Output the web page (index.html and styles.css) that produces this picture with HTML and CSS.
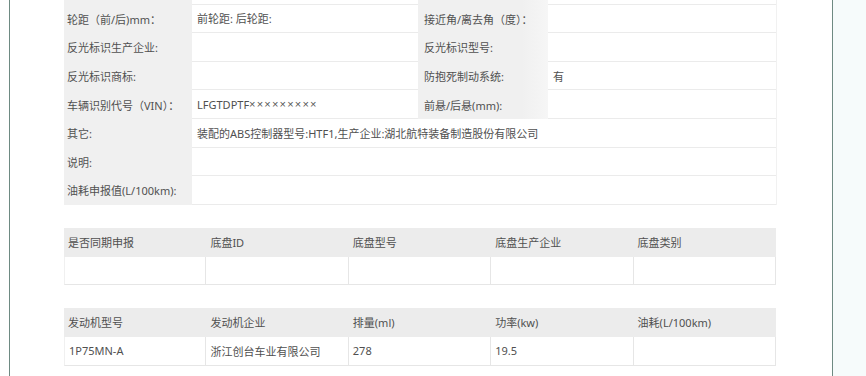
FILE: index.html
```html
<!DOCTYPE html>
<html lang="zh-CN">
<head>
<meta charset="utf-8">
<title>车辆参数</title>
<link rel="stylesheet" href="styles.css">
</head>
<body>
<div class="frame">
  <div class="content">
    <div class="spec">
      <div class="lab"></div><div class="val"></div><div class="lab lab2"></div><div class="val"></div>

      <div class="lab">轮距（前/后)mm：</div><div class="val">前轮距: 后轮距:</div>
      <div class="lab lab2">接近角/离去角（度）：</div><div class="val"></div>

      <div class="lab">反光标识生产企业:</div><div class="val"></div>
      <div class="lab lab2">反光标识型号:</div><div class="val"></div>

      <div class="lab">反光标识商标:</div><div class="val"></div>
      <div class="lab lab2">防抱死制动系统:</div><div class="val">有</div>

      <div class="lab">车辆识别代号（VIN）：</div><div class="val">LFGTDPTF<span class="x">×××××××××</span></div>
      <div class="lab lab2">前悬/后悬(mm):</div><div class="val"></div>

      <div class="lab">其它:</div><div class="val wide">装配的ABS控制器型号:HTF1,生产企业:湖北航特装备制造股份有限公司</div>

      <div class="lab">说明:</div><div class="val wide"></div>

      <div class="lab">油耗申报值(L/100km):</div><div class="val wide"></div>
    </div>

    <div class="grid5">
      <div class="th">是否同期申报</div><div class="th">底盘ID</div><div class="th">底盘型号</div><div class="th">底盘生产企业</div><div class="th">底盘类别</div>
      <div class="td"></div><div class="td"></div><div class="td"></div><div class="td"></div><div class="td"></div>
    </div>

    <div class="grid5">
      <div class="th">发动机型号</div><div class="th">发动机企业</div><div class="th">排量(ml)</div><div class="th">功率(kw)</div><div class="th">油耗(L/100km)</div>
      <div class="td">1P75MN-A</div><div class="td">浙江创台车业有限公司</div><div class="td">278</div><div class="td">19.5</div><div class="td"></div>
    </div>
  </div>
</div>
</body>
</html>
```

FILE: styles.css
```css
html, body {
  margin: 0;
  padding: 0;
  background: #ffffff;
}
body {
  width: 866px;
  height: 376px;
  overflow: hidden;
  font-family: "Noto Sans", "Noto Sans CJK SC", sans-serif;
  font-size: 11px;
  color: #505050;
  background: linear-gradient(to right, #ffffff 833px, #f6fbfb 833px);
}
.frame {
  display: flow-root;
  margin-left: 9px;
  width: 822px;
  height: 376px;
  border-left: 1px solid #6e8a82;
  border-right: 1px solid #6e8a82;
  background: #ffffff;
}
.content {
  padding-left: 54px;
  width: 712px;
}
.spec {
  margin-top: -24px;
  display: grid;
  grid-template-columns: 128px 226px 130px 228px;
  grid-auto-rows: 28.6px;
  box-shadow: 1px 0 0 #f1f1f1;
}
.lab {
  background: #f0f0f0;
  display: flex;
  align-items: center;
  padding-left: 3px;
  white-space: nowrap;
}
.lab2 {
  padding-left: 6px;
  background: linear-gradient(to right, #f0f0f0 80%, #f6f6f6 100%);
}
.val {
  display: flex;
  align-items: center;
  padding-left: 5px;
  border-bottom: 1px solid #ebebeb;
  box-sizing: border-box;
  white-space: nowrap;
}
.x {
  font-family: "Liberation Sans", sans-serif;
  letter-spacing: 1.2px;
  color: #555;
}
.wide {
  grid-column: span 3;
}
.grid5 {
  margin-top: 23px;
  display: grid;
  grid-template-columns: repeat(5, 1fr);
  grid-template-rows: 29px 28px;
}
.grid5:last-child {
  grid-template-rows: 29px 29px;
}
.th {
  background: #ececec;
  display: flex;
  align-items: center;
  padding-left: 4px;
}
.td {
  display: flex;
  align-items: center;
  padding-left: 4px;
  border-right: 1px solid #e6e6e6;
  border-bottom: 1px solid #e6e6e6;
  box-sizing: border-box;
}
.td:nth-child(5n+1) {
  border-left: 1px solid #f0f0f0;
}
```
